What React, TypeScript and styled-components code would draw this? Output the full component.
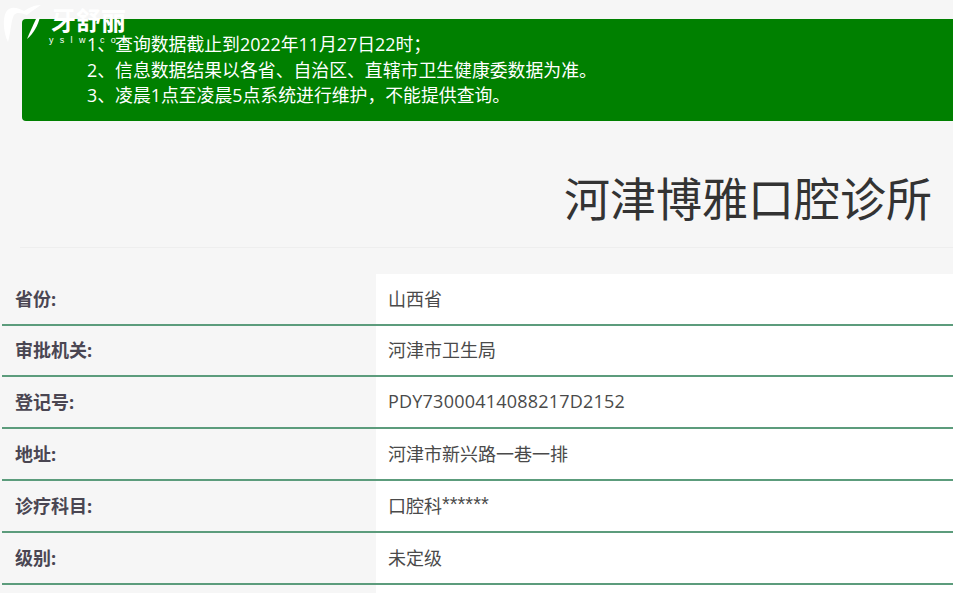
import React from "react"
import styled, { createGlobalStyle } from "styled-components"

const GlobalStyle = createGlobalStyle`
  html, body {
    margin: 0;
    padding: 0;
    background: #f6f6f6;
    overflow: hidden;
  }
  body {
    font-family: "Open Sans", "Noto Sans CJK SC", sans-serif;
  }
`

const Page = styled.div`
  position: relative;
  width: 953px;
  height: 593px;
  overflow: hidden;
  padding-top: 19px;
  box-sizing: border-box;
`

const Logo = styled.div`
  position: absolute;
  top: 0;
  left: 0;
  width: 140px;
  height: 50px;
  color: #fff;
`

const LogoName = styled.span`
  position: absolute;
  top: 4px;
  left: 51px;
  font-family: "Noto Sans CJK SC", sans-serif;
  font-size: 25px;
  line-height: 30px;
  font-weight: 700;
  white-space: nowrap;
`

const LogoSub = styled.span`
  position: absolute;
  top: 35px;
  left: 49px;
  font-family: "Liberation Sans", sans-serif;
  font-size: 9px;
  line-height: 10px;
  letter-spacing: 6.3px;
  white-space: nowrap;
`

const Notice = styled.div`
  margin-left: 22px;
  height: 102px;
  box-sizing: border-box;
  padding: 13px 0 0 65px;
  background: #008000;
  border-radius: 4px 0 0 4px;
  color: #fff;
  font-size: 17.85px;
  line-height: 25.5px;
`

const NoticeLine = styled.div`
  white-space: nowrap;
`

const TitleBlock = styled.div`
  margin: 0 0 0 20px;
  height: 126px;
  border-bottom: 1px solid #eeeeee;
  display: flex;
  align-items: center;
  justify-content: flex-end;
  padding-right: 21px;
`

const Title = styled.h1`
  margin: 28px 0 0;
  font-size: 46px;
  font-weight: 400;
  line-height: 1.1;
  color: #333;
`

const Table = styled.div`
  margin: 25.8px 0 0 2px;
`

const Row = styled.div`
  display: grid;
  grid-template-columns: 374px 1fr;
  height: 51.8px;
  border-bottom: 2px solid #5c9c7c;
  box-sizing: border-box;
  font-size: 18px;
  color: #4a4a4a;
`

const Label = styled.div`
  display: flex;
  align-items: center;
  padding: 0 0 2px 13px;
  font-weight: 700;
  color: #4a4652;
`

const Value = styled.div`
  display: flex;
  align-items: center;
  padding: 0 0 2px 12px;
  background: #fff;
`

const Stars = styled.span`
  font-family: "Liberation Sans", sans-serif;
  font-size: 20px;
`

const Serial = styled.span`
  letter-spacing: 0.22px;
`

const rows: [string, React.ReactNode][] = [
  ["省份:", "山西省"],
  ["审批机关:", "河津市卫生局"],
  ["登记号:", <Serial>PDY73000414088217D2152</Serial>],
  ["地址:", "河津市新兴路一巷一排"],
  ["诊疗科目:", <>口腔科<Stars>******</Stars></>],
  ["级别:", "未定级"],
  ["", ""],
]

const App: React.FC = () => {
  return (
    <Page>
      <GlobalStyle />
      <Notice>
        <NoticeLine>1、查询数据截止到2022年11月27日22时；</NoticeLine>
        <NoticeLine>2、信息数据结果以各省、自治区、直辖市卫生健康委数据为准。</NoticeLine>
        <NoticeLine>3、凌晨1点至凌晨5点系统进行维护，不能提供查询。</NoticeLine>
      </Notice>
      <TitleBlock>
        <Title>河津博雅口腔诊所</Title>
      </TitleBlock>
      <Table>
        {rows.map(([label, value], i) => (
          <Row key={i}>
            <Label>{label}</Label>
            <Value>{value}</Value>
          </Row>
        ))}
      </Table>
      <Logo>
        <svg width="46" height="46" viewBox="0 0 46 46" fill="#fff">
          <path d="M6 12 C10 6 17 7 24 11 C29 8 34 5 41 5 C36 8 31 12 27 15 C21 13 17 12 14 15 C11 20 11 32 8 42 C4 34 2 20 6 12 Z" />
          <path d="M40 17 C38 25 34 33 27 39 C30 32 33 25 36 19 Z" />
        </svg>
        <LogoName>牙舒丽</LogoName>
        <LogoSub>yslw.com</LogoSub>
      </Logo>
    </Page>
  )
}

export default App
